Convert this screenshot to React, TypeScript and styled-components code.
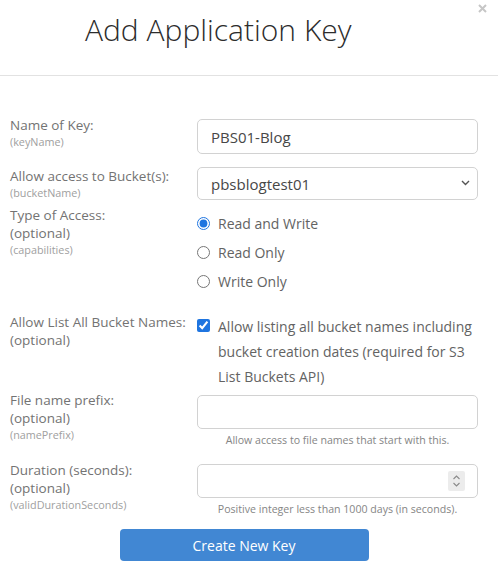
import React from "react";
import styled, { createGlobalStyle } from "styled-components";

const GlobalStyle = createGlobalStyle`
  html, body { margin: 0; padding: 0; background: #fff; }
  body { font-family: "Open Sans", "Liberation Sans", sans-serif; color: #555; }
  * { box-sizing: border-box; }
`;

const Modal = styled.div`
  position: relative;
  width: 498px;
  height: 569px;
  background: #fff;
  overflow: hidden;
`;

const Close = styled.button`
  position: absolute;
  top: 2px;
  right: 10px;
  width: 12px;
  height: 12px;
  padding: 0;
  border: 0;
  background: none;
  display: flex;
  align-items: center;
  justify-content: center;
`;

const Header = styled.div`
  height: 76px;
  border-bottom: 1px solid #e2e2e2;
  padding-left: 85px;
`;

const Title = styled.h1`
  margin: 0;
  padding-top: 10px;
  font-family: "Open Sans", sans-serif;
  font-weight: 300;
  font-size: 30px;
  line-height: 40px;
  color: #2c2c2c;
`;

const Form = styled.form`
  display: flex;
  flex-direction: column;
  padding: 40px 20px 0 10px;
`;

const Row = styled.div<{ $mt: number }>`
  display: grid;
  grid-template-columns: 187px 281px;
  align-items: start;
  margin-top: ${(p) => p.$mt}px;
`;

const LabelBlock = styled.div`
  display: flex;
  flex-direction: column;
`;

const MainLabel = styled.span`
  font-size: 13.5px;
  line-height: 18px;
  color: #737373;
  white-space: nowrap;
`;

const SubLabel = styled.span`
  font-size: 10.8px;
  line-height: 15px;
  color: #a0a0a0;
`;

const Control = styled.div<{ $mt: number }>`
  display: flex;
  flex-direction: column;
  margin-top: ${(p) => p.$mt}px;
  position: relative;
`;

const TextInput = styled.input<{ $h?: number }>`
  width: 281px;
  height: ${(p) => p.$h ?? 34}px;
  border: 1px solid #d2d2d2;
  border-radius: 5px;
  padding: 0 13px;
  font-family: "Open Sans", sans-serif;
  font-size: 15px;
  color: #474747;
  background: #fff;
  outline: none;
`;

const Select = styled.select`
  appearance: none;
  -webkit-appearance: none;
  width: 281px;
  height: 33px;
  border: 1px solid #d2d2d2;
  border-radius: 5px;
  padding: 0 13px;
  font-family: "Open Sans", sans-serif;
  font-size: 15px;
  color: #474747;
  background: #fff;
  outline: none;
`;

const Chevron = styled.span`
  position: absolute;
  right: 8px;
  top: 13px;
  display: flex;
  pointer-events: none;
`;

const Spinner = styled.span`
  position: absolute;
  right: 13px;
  top: 7px;
  width: 17px;
  height: 20px;
  background: #ececec;
  border-radius: 2px;
  display: flex;
  align-items: center;
  justify-content: center;
  pointer-events: none;
`;

const OptionList = styled.div`
  display: flex;
  flex-direction: column;
`;

const OptionRow = styled.label<{ $lh: number }>`
  display: flex;
  align-items: flex-start;
  gap: 8px;
  font-size: 14px;
  line-height: ${(p) => p.$lh}px;
  color: #636363;
`;

const Radio = styled.input`
  margin: 0;
  width: 13px;
  height: 13px;
  flex: none;
  accent-color: #1f75e0;
  margin-top: 8px;
`;

const Check = styled.input`
  margin: 0;
  width: 13px;
  height: 13px;
  flex: none;
  accent-color: #1f75e0;
  margin-top: 5px;
`;

const Help = styled.div`
  font-size: 10.6px;
  line-height: 14px;
  color: #858585;
  text-align: center;
  margin-top: 4px;
`;

const Submit = styled.button`
  align-self: center;
  margin-top: 13px;
  width: 249px;
  height: 32px;
  border: 0;
  border-radius: 4px;
  background: #4187d3;
  color: #fff;
  font-family: "Open Sans", sans-serif;
  font-size: 14px;
`;

export default function App() {
  return (
    <>
      <GlobalStyle />
      <Modal>
        <Close aria-label="close">
          <svg width="9" height="9" viewBox="0 0 9 9">
            <path d="M1 1L8 8M8 1L1 8" stroke="#c6c6c6" strokeWidth="2" />
          </svg>
        </Close>
        <Header>
          <Title>Add Application Key</Title>
        </Header>
        <Form onSubmit={(e) => e.preventDefault()}>
          <Row $mt={0}>
            <LabelBlock>
              <MainLabel>Name of Key:</MainLabel>
              <SubLabel>(keyName)</SubLabel>
            </LabelBlock>
            <Control $mt={3}>
              <TextInput $h={35} defaultValue="PBS01-Blog" />
            </Control>
          </Row>
          <Row $mt={13}>
            <LabelBlock>
              <MainLabel>Allow access to Bucket(s):</MainLabel>
              <SubLabel>(bucketName)</SubLabel>
            </LabelBlock>
            <Control $mt={0}>
              <Select defaultValue="pbsblogtest01">
                <option>pbsblogtest01</option>
              </Select>
              <Chevron>
                <svg width="9" height="6" viewBox="0 0 9 6">
                  <path d="M1 1l3.5 3.5L8 1" stroke="#555" strokeWidth="1.4" fill="none" />
                </svg>
              </Chevron>
            </Control>
          </Row>
          <Row $mt={6}>
            <LabelBlock>
              <MainLabel>Type of Access:</MainLabel>
              <MainLabel>(optional)</MainLabel>
              <SubLabel>(capabilities)</SubLabel>
            </LabelBlock>
            <Control $mt={3}>
              <OptionList>
                <OptionRow $lh={29}>
                  <Radio type="radio" name="cap" defaultChecked />
                  Read and Write
                </OptionRow>
                <OptionRow $lh={29}>
                  <Radio type="radio" name="cap" />
                  Read Only
                </OptionRow>
                <OptionRow $lh={29}>
                  <Radio type="radio" name="cap" />
                  Write Only
                </OptionRow>
              </OptionList>
            </Control>
          </Row>
          <Row $mt={17}>
            <LabelBlock>
              <MainLabel>Allow List All Bucket Names:</MainLabel>
              <MainLabel>(optional)</MainLabel>
            </LabelBlock>
            <Control $mt={1}>
              <OptionRow $lh={25}>
                <Check type="checkbox" defaultChecked />
                <span>
                  Allow listing all bucket names including bucket creation dates (required for S3 List
                  Buckets API)
                </span>
              </OptionRow>
            </Control>
          </Row>
          <Row $mt={2}>
            <LabelBlock>
              <MainLabel>File name prefix:</MainLabel>
              <MainLabel>(optional)</MainLabel>
              <SubLabel>(namePrefix)</SubLabel>
            </LabelBlock>
            <Control $mt={4}>
              <TextInput />
              <Help>Allow access to file names that start with this.</Help>
            </Control>
          </Row>
          <Row $mt={14}>
            <LabelBlock>
              <MainLabel>Duration (seconds):</MainLabel>
              <MainLabel>(optional)</MainLabel>
              <SubLabel>(validDurationSeconds)</SubLabel>
            </LabelBlock>
            <Control $mt={3}>
              <TextInput />
              <Spinner>
                <svg width="9" height="14" viewBox="0 0 9 14">
                  <path d="M1.5 5l3-3 3 3M1.5 9l3 3 3-3" stroke="#8a8a8a" strokeWidth="1.1" fill="none" />
                </svg>
              </Spinner>
              <Help>Positive integer less than 1000 days (in seconds).</Help>
            </Control>
          </Row>
          <Submit type="submit">Create New Key</Submit>
        </Form>
      </Modal>
    </>
  );
}
